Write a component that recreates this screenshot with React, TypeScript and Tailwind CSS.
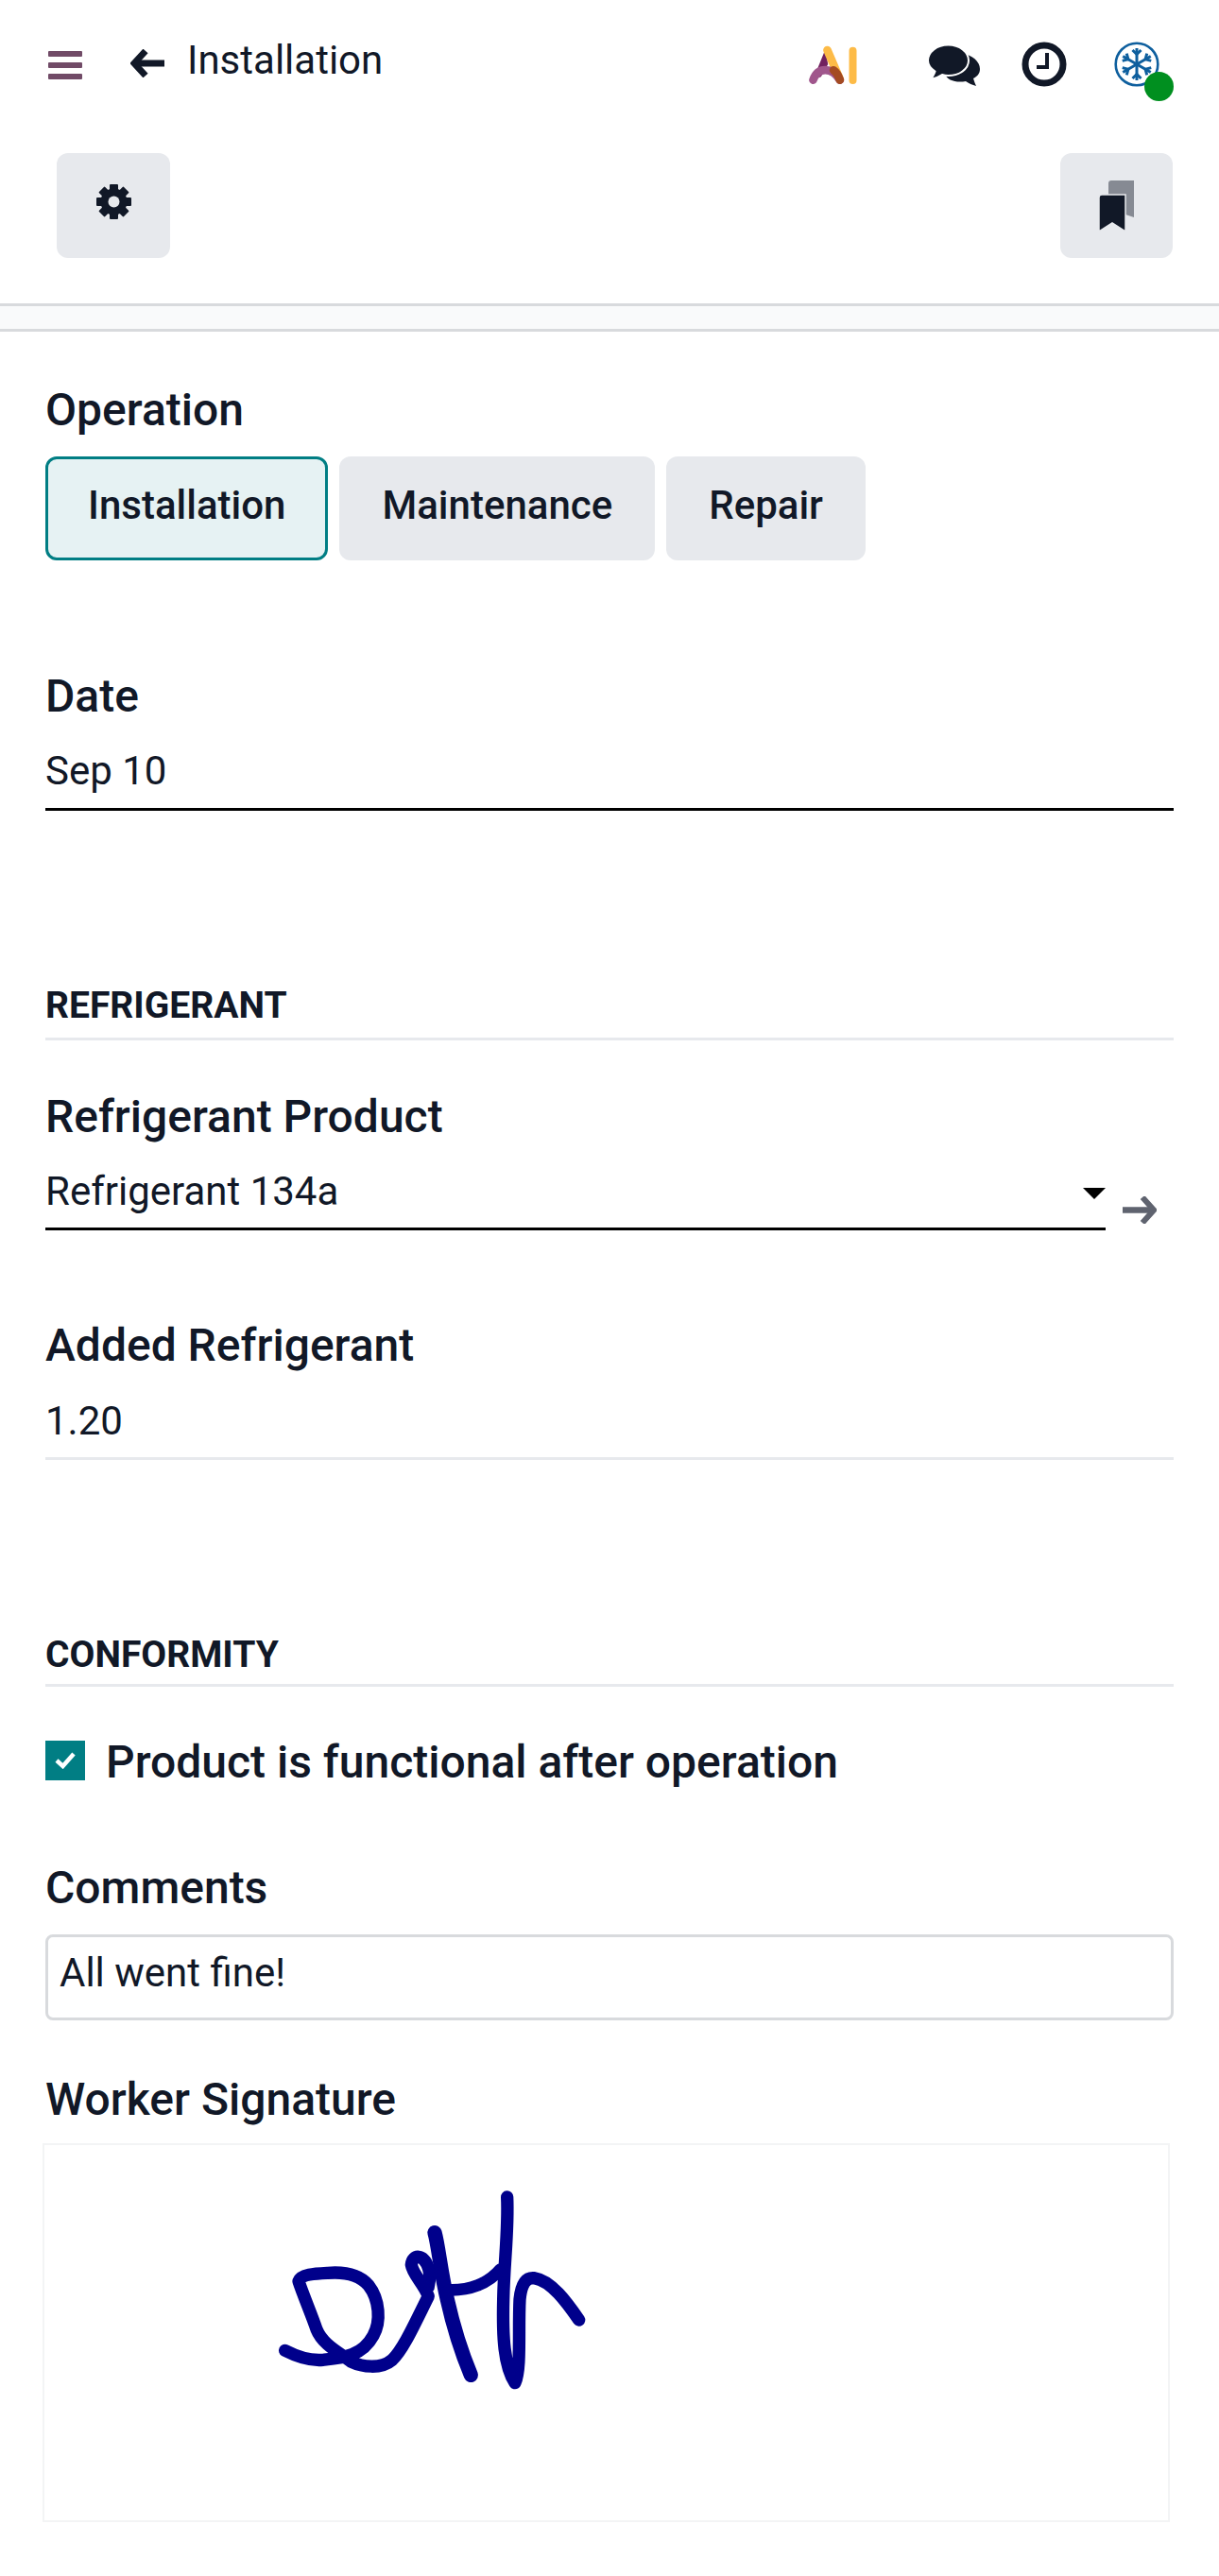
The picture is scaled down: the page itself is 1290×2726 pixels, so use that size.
import React from "react";

function Label({ children, className = "" }: { children: React.ReactNode; className?: string }) {
  return <div className={`text-[48px] leading-[54px] font-medium pt-[1px] -mb-[1px] ${className}`}>{children}</div>;
}

function SectionTitle({ children, className = "" }: { children: React.ReactNode; className?: string }) {
  return (
    <div className={`text-[39px] leading-[44px] font-bold border-b-[3px] border-[#e7e9ed] ${className}`}>{children}</div>
  );
}

function AiLogo() {
  return (
    <svg width="51" height="41" viewBox="0 0 152 123" className="shrink-0">
      <path d="M52 12 L13 108 L38 100 L60 60 Z" fill="#71215f" />
      <path d="M58 15 L98 108" stroke="#fdbb47" strokeWidth="26" strokeLinecap="round" fill="none" />
      <path d="M13 110 C28 68 72 68 98 110" stroke="#a0568c" strokeWidth="26" strokeLinecap="round" fill="none" />
      <path d="M78 79 C88 86 94 98 98 110" stroke="#a44b22" strokeWidth="26" strokeLinecap="round" fill="none" />
      <rect x="127" y="5" width="24" height="118" rx="12" fill="#fdbb47" />
    </svg>
  );
}

function ChatIcon() {
  return (
    <svg width="55" height="44" viewBox="0 0 55 44" className="shrink-0">
      <path d="M35 9 C47 11 55 18 55 26 C55 31 52 34 48 36 C49 39 50 42 51 44 C47 43 43 41 40 39 C30 41 20 38 18 31 Z" fill="#111827" />
      <path d="M21.5 0.5 C33.5 0.5 43 8 43 17 C43 26 33.5 33 21.5 33 C19 33 17 32.7 15 32 C12 34 8 36 3 37 C5 34 7 31 7.5 28.5 C3 25.5 0 21.5 0 17 C0 8 9.5 0.5 21.5 0.5 Z" fill="#111827" stroke="#ffffff" strokeWidth="2" />
    </svg>
  );
}

function ClockIcon() {
  return (
    <svg width="48" height="48" viewBox="0 0 48 48" className="shrink-0">
      <circle cx="24" cy="24" r="20" fill="none" stroke="#111827" strokeWidth="7" />
      <path d="M27 12 V27 H16" fill="none" stroke="#111827" strokeWidth="4" />
    </svg>
  );
}

function GearIcon() {
  const teeth = [0, 45, 90, 135];
  return (
    <svg width="37" height="37" viewBox="0 0 37 37" className="mb-[8px]">
      <g fill="#111827">
        {teeth.map((a) => (
          <rect key={a} x="14" y="0" width="9" height="37" rx="1" transform={`rotate(${a} 18.5 18.5)`} />
        ))}
      </g>
      <circle cx="18.5" cy="18.5" r="10" fill="none" stroke="#111827" strokeWidth="8" />
      <circle cx="18.5" cy="18.5" r="6" fill="#e7e9ed" />
    </svg>
  );
}

function Snow() {
  const arms = [0, 60, 120, 180, 240, 300];
  return (
    <div className="relative w-[48px] h-[48px] shrink-0">
      <svg width="48" height="48" viewBox="0 0 48 48">
        <circle cx="24" cy="24" r="22.3" fill="none" stroke="#0e5f9e" strokeWidth="2.6" />
        {arms.map((a) => (
          <g key={a} transform={`rotate(${a} 24 24)`} stroke="#0e5f9e" strokeWidth="3" fill="none">
            <path d="M24 24 V7" />
            <path d="M19.5 9 L24 13.5 L28.5 9" />
          </g>
        ))}
      </svg>
      <div className="absolute left-[32px] top-[32px] w-[31px] h-[31px] rounded-full bg-[#008f1f]" />
    </div>
  );
}

function Bookmarks() {
  return (
    <svg width="37" height="54" viewBox="0 0 37 54">
      <path d="M10 3 Q10 0 13 0 H37 V39 L10 30 Z" fill="#868a93" />
      <path d="M0 18 Q0 15 3 15 H28 V54 L14 45 L0 54 Z" fill="#111827" stroke="#e7e9ed" strokeWidth="1.5" />
    </svg>
  );
}

function Signature() {
  return (
    <svg width="420" height="290" viewBox="0 30 1260 870" className="ml-[193px]">
      <path
        d="M185 682 C230 705 270 715 305 712 C370 705 430 700 465 635 C490 590 485 520 450 475 C420 440 370 432 320 436 C280 438 235 440 228 462 C240 500 270 570 285 615 C305 665 360 690 395 718 C430 735 490 742 525 712 C560 680 600 590 640 510 C625 470 590 440 586 410 C590 375 625 375 640 420 C650 450 640 470 640 480"
        fill="none"
        stroke="#00008b"
        strokeWidth="40"
        strokeLinecap="round"
        strokeLinejoin="round"
      />
      <path d="M660 308 C672 350 680 440 700 520 C720 610 750 700 775 760" fill="none" stroke="#00008b" strokeWidth="46" strokeLinecap="round" />
      <path d="M705 490 C770 492 830 470 868 425" fill="none" stroke="#00008b" strokeWidth="38" strokeLinecap="round" />
      <path
        d="M890 195 C895 300 880 400 878 520 C875 640 880 730 915 785 C935 740 925 620 930 520 C935 470 950 450 975 452 C1030 460 1080 530 1118 585"
        fill="none"
        stroke="#00008b"
        strokeWidth="40"
        strokeLinecap="round"
        strokeLinejoin="round"
      />
    </svg>
  );
}

export default function App() {
  return (
    <div className="w-[1290px] min-h-[2726px] bg-white text-[#111827] font-['Roboto',sans-serif]">
      <header>
        <div className="flex items-center h-[136px] pl-[51px] pr-[63px]">
          <div className="flex flex-col gap-[6px] w-[36px] shrink-0 mt-[2px]">
            <span className="block h-[6px] rounded-[1px] bg-[#714b67]" />
            <span className="block h-[6px] rounded-[1px] bg-[#714b67]" />
            <span className="block h-[6px] rounded-[1px] bg-[#714b67]" />
          </div>
          <svg width="36" height="30" viewBox="0 0 36 30" className="ml-[51px] shrink-0 mb-[3px]">
            <path d="M16 2 L4 15 L16 28" fill="none" stroke="#111827" strokeWidth="7" />
            <path d="M5 15 H36" stroke="#111827" strokeWidth="7" />
          </svg>
          <div className="ml-[24px] text-[42px] leading-[50px] mb-[9px]">Installation</div>
          <div className="ml-auto flex items-center">
            <AiLogo />
            <div className="ml-[75px] mt-[2px]"><ChatIcon /></div>
            <div className="ml-[44px]"><ClockIcon /></div>
            <div className="ml-[50px]"><Snow /></div>
          </div>
        </div>
        <div className="flex justify-between pl-[60px] pr-[49px] mt-[26px] mb-[48px]">
          <button className="w-[120px] h-[111px] rounded-[12px] bg-[#e7e9ed] flex items-center justify-center">
            <GearIcon />
          </button>
          <button className="w-[119px] h-[111px] rounded-[12px] bg-[#e7e9ed] flex items-center justify-center">
            <Bookmarks />
          </button>
        </div>
        <div className="h-[30px] border-y-[3px] border-[#d8dadd] bg-[#f9fafb]" />
      </header>

      <main className="px-[48px] pb-[57px]">
        <div className="pt-[55px]"><Label>Operation</Label></div>
        <div className="flex gap-[12px] mt-[23px]">
          <div className="h-[110px] pt-[24px] px-[42px] border-[3px] rounded-[12px] border-[#017e84] bg-[#e6f2f3] text-[42px] leading-[50px] font-medium">Installation</div>
          <div className="h-[110px] pt-[24px] px-[42px] border-[3px] rounded-[12px] border-transparent bg-[#e7e9ed] text-[42px] leading-[50px] font-medium">Maintenance</div>
          <div className="h-[110px] pt-[24px] px-[42px] border-[3px] rounded-[12px] border-transparent bg-[#e7e9ed] text-[42px] leading-[50px] font-medium">Repair</div>
        </div>

        <Label className="mt-[116px]">Date</Label>
        <div className="mt-[29px] pb-[15px] border-b-[3px] border-black text-[42px] leading-[48px]">Sep 10</div>

        <SectionTitle className="mt-[184px] pb-[12px]">REFRIGERANT</SectionTitle>

        <Label className="mt-[53px]">Refrigerant Product</Label>
        <div className="flex items-end mt-[29px]">
          <div className="flex-1 flex items-start justify-between pb-[14px] border-b-[3px] border-black">
            <span className="text-[42px] leading-[48px]">Refrigerant 134a</span>
            <svg width="24" height="12" viewBox="0 0 24 12" className="mt-[20px]">
              <path d="M0 0 H24 L12 12 Z" fill="#000000" />
            </svg>
          </div>
          <svg width="36" height="29" viewBox="0 0 36 29" className="ml-[18px] mr-[18px] mb-[7px]">
            <path d="M21 1 L33 14.5 L21 28" fill="none" stroke="#5f636f" strokeWidth="6" />
            <path d="M0 14.5 H31" stroke="#5f636f" strokeWidth="6.5" />
          </svg>
        </div>

        <Label className="mt-[94px]">Added Refrigerant</Label>
        <div className="mt-[30px] pb-[14px] border-b-[3px] border-[#e7e9ed] text-[42px] leading-[48px]">1.20</div>

        <SectionTitle className="mt-[184px] pb-[9px]">CONFORMITY</SectionTitle>

        <div className="flex items-start mt-[52px]">
          <div className="w-[42px] h-[42px] mt-[5px] bg-[#017e84] flex items-center justify-center shrink-0">
            <svg width="24" height="18" viewBox="0 0 24 18">
              <path d="M3 9 L9.5 15 L21 2" fill="none" stroke="#ffffff" strokeWidth="4.5" />
            </svg>
          </div>
          <Label className="ml-[22px]">Product is functional after operation</Label>
        </div>

        <Label className="mt-[79px]">Comments</Label>
        <div className="mt-[23px] h-[91px] border-[3px] border-[#d8dadd] rounded-[8px] pt-[14px] px-[12px] text-[42px] leading-[48px]">All went fine!</div>

        <Label className="mt-[56px]">Worker Signature</Label>
        <div className="mt-[20px] w-[1193px] h-[401px] -ml-[3px] border-[2px] border-[#f3f4f5]">
          <Signature />
        </div>
      </main>
    </div>
  );
}
